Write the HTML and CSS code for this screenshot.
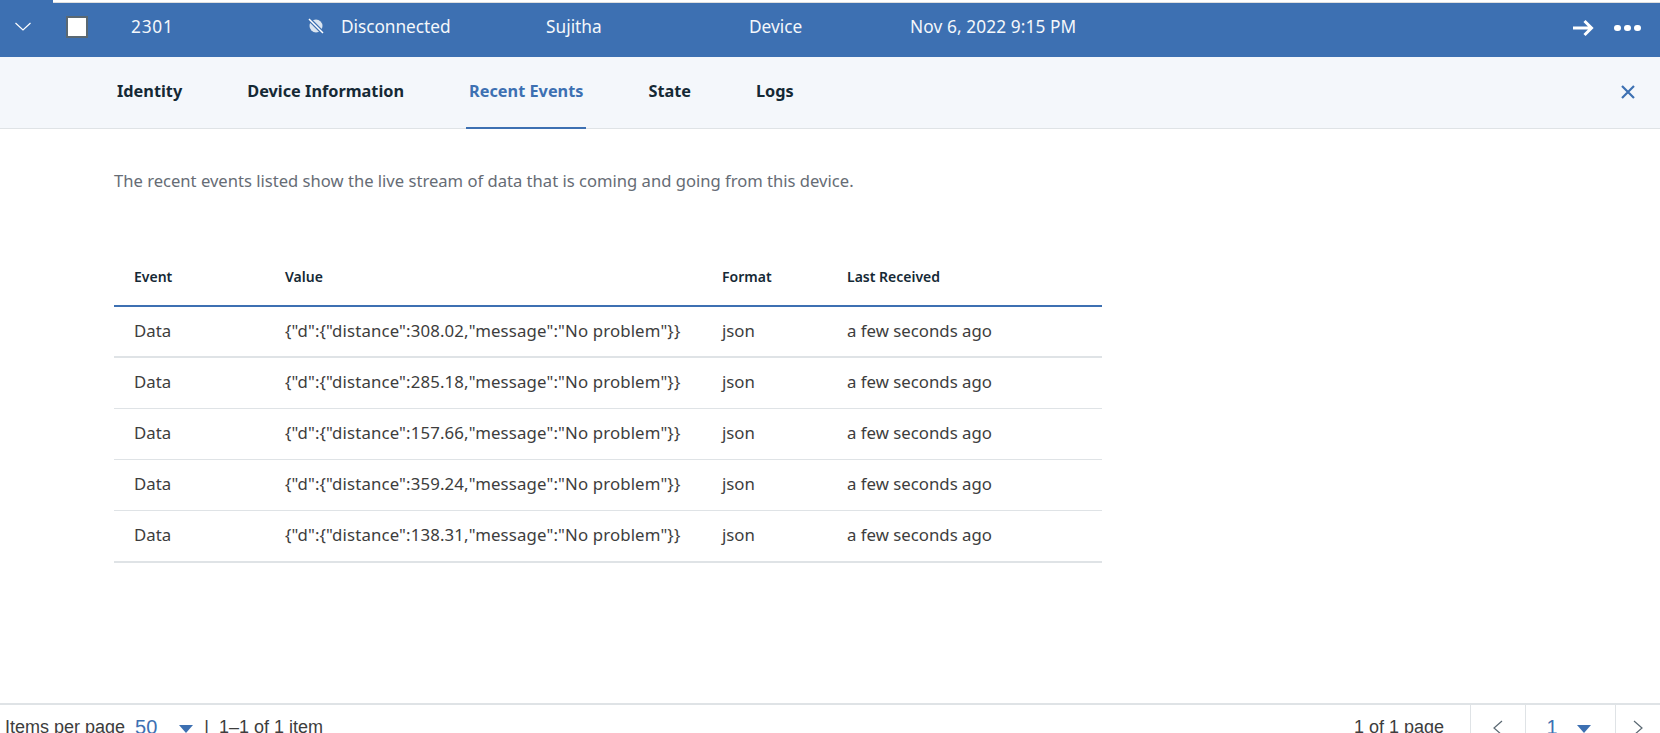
FILE: index.html
```html
<!DOCTYPE html>
<html>
<head>
<meta charset="utf-8">
<title>Recent Events</title>
<link rel="stylesheet" href="styles.css">
</head>
<body>
<div class="topline"><div></div></div>
<div class="device">
	<svg class="chev" width="18" height="16" viewBox="0 0 18 16"><path d="M1.500 4 L9 11 L16.500 4" fill="none" stroke="#fff" stroke-width="1.200"/></svg>
	<span class="check"></span>
	<span class="c-id">2301</span>
	<svg class="nolink" width="16" height="16" viewBox="0 0 16 16"><circle cx="8" cy="8" r="6.500" fill="#dbe5f0"/><path d="M1 1 L15 15" stroke="#3d70b2" stroke-width="4"/><path d="M1 1 L15 15" stroke="#fff" stroke-width="1.500"/></svg>
	<span class="c-status">Disconnected</span>
	<span class="c-owner">Sujitha</span>
	<span class="c-type">Device</span>
	<span class="c-date">Nov 6, 2022 9:15 PM</span>
	<svg class="arrow" width="22" height="20" viewBox="0 0 22 20"><path d="M1 10 H19 M12.500 3 L19.500 10 L12.500 17" fill="none" stroke="#fff" stroke-width="3"/></svg>
	<span class="dots"><i></i><i></i><i></i></span>
</div>
<div class="tabs">
	<a>Identity</a>
	<a>Device Information</a>
	<a class="active">Recent Events</a>
	<a>State</a>
	<a>Logs</a>
	<svg class="close" width="16" height="16" viewBox="0 0 16 16"><path d="M2 2 L14 14 M14 2 L2 14" fill="none" stroke="#3d70b2" stroke-width="2.200"/></svg>
</div>
<div class="content">
	<p class="desc">The recent events listed show the live stream of data that is coming and going from this device.</p>
	<table class="events">
		<thead>
			<tr><th class="w1">Event</th><th class="w2">Value</th><th class="w3">Format</th><th>Last Received</th></tr>
		</thead>
		<tbody>
			<tr><td>Data</td><td class="val">{"d":{"distance":308.02,"message":"No problem"}}</td><td>json</td><td>a few seconds ago</td></tr>
			<tr><td>Data</td><td class="val">{"d":{"distance":285.18,"message":"No problem"}}</td><td>json</td><td>a few seconds ago</td></tr>
			<tr><td>Data</td><td class="val">{"d":{"distance":157.66,"message":"No problem"}}</td><td>json</td><td>a few seconds ago</td></tr>
			<tr><td>Data</td><td class="val">{"d":{"distance":359.24,"message":"No problem"}}</td><td>json</td><td>a few seconds ago</td></tr>
			<tr><td>Data</td><td class="val">{"d":{"distance":138.31,"message":"No problem"}}</td><td>json</td><td>a few seconds ago</td></tr>
		</tbody>
	</table>
</div>
<div class="pager">
	<span class="per">Items per page</span>
	<span class="num n50">50</span>
	<span class="caret"></span>
	<span class="bar">|</span>
	<span>1–1 of 1 item</span>
	<span class="pages">1 of 1 page</span>
	<span class="cell c-prev"><svg width="12" height="16" viewBox="0 0 12 16"><path d="M10 1 L2 8 L10 15" fill="none" stroke="#5a6872" stroke-width="1.200"/></svg></span>
	<span class="cell c-page"><span class="num">1</span><span class="caret"></span></span>
	<span class="cell c-next"><svg width="12" height="16" viewBox="0 0 12 16"><path d="M2 1 L10 8 L2 15" fill="none" stroke="#5a6872" stroke-width="1.200"/></svg></span>
</div>
</body>
</html>
```

FILE: styles.css
```css
*{margin:0;padding:0;box-sizing:border-box;}
html,body{height:733px;overflow:hidden;}
body{background:#fff;font-family:"Noto Sans","Open Sans",sans-serif;font-size:16px;color:#152935;display:flex;flex-direction:column;}
.topline{height:3px;background:#3d70b2;padding-left:53px;flex:none;}
.topline div{height:3px;background:#fff;border-bottom:1px solid #dfdfdf;}
.device{height:54px;flex:none;background:#3d70b2;color:#f4f7fb;display:flex;align-items:center;padding-bottom:8px;font-size:17.300px;}
.device span{white-space:nowrap;}
.chev{margin:2px 0 0 14px;}
.check{width:22px;height:22px;background:#fff;border:2px solid #5a6872;margin:2px 0 0 34px;flex:none;}
.c-id{width:177px;margin-left:43px;letter-spacing:.8px;}
.nolink{flex:none;}
.c-status{width:205px;margin-left:17px;letter-spacing:-.05px;}
.c-owner{width:203px;}
.c-type{width:161px;}
.c-date{width:662px;letter-spacing:.1px;}
.arrow{flex:none;margin-top:4px;}
.dots{display:flex;gap:3px;margin-left:20px;margin-top:4px;}
.dots i{width:7px;height:6px;border-radius:3px;background:#fff;}
.tabs{height:72px;flex:none;background:#f4f7fb;border-bottom:1px solid #dfe3e6;display:flex;padding-left:114px;}
.tabs a{padding:0 3px;margin-right:59px;height:72px;line-height:68px;font-weight:700;font-size:16.300px;white-space:nowrap;}
.tabs .active{color:#3d70b2;border-bottom:2px solid #3d70b2;}
.close{margin:27px 24px 0 auto;}
.content{flex:1;padding:0 0 0 114px;}
.desc{margin-top:41px;font-size:16.600px;line-height:22px;color:#666c75;}
.events{margin-top:52px;width:988px;border-collapse:collapse;}
.events th{height:62px;text-align:left;font-size:14px;font-weight:600;padding:4px 0 0 20px;border-bottom:2px solid #3d70b2;}
.events td{height:51px;padding:0 0 2px 20px;font-size:16.800px;color:#3d3d3d;border-bottom:1px solid #dfe3e6;white-space:nowrap;}
.events .val{letter-spacing:.14px;}
.events tbody tr:first-child td,.events tbody tr:last-child td{border-bottom-width:2px;}
.events tbody tr:last-child td{height:52px;}
.w1{width:151px;}
.w2{width:437px;}
.w3{width:125px;}
.pager{height:30px;flex:none;border-top:2px solid #dfe3e6;display:flex;align-items:flex-start;font-family:"Liberation Sans",sans-serif;font-size:18px;color:#3d3d3d;padding-left:5px;}
.pager>span{line-height:44px;white-space:nowrap;}
.num{color:#3d70b2;font-size:20px;}
.n50{margin-left:10px;}
.caret{width:0;height:0;border:7px solid transparent;border-top:8px solid #3d70b2;border-bottom:0;margin:20px 0 0 22px;}
.c-page .caret{margin-left:19px;}
.bar{margin:0 10px 0 11px;}
.pages{margin-left:auto;width:116px;}
.cell{height:28px;border-left:1px solid #dfe3e6;display:flex;justify-content:center;align-items:flex-start;}
.cell svg{margin-top:15px;}
.c-prev{width:55px;}
.c-page{width:90px;padding-right:4px;}
.c-next{width:45px;}
```
